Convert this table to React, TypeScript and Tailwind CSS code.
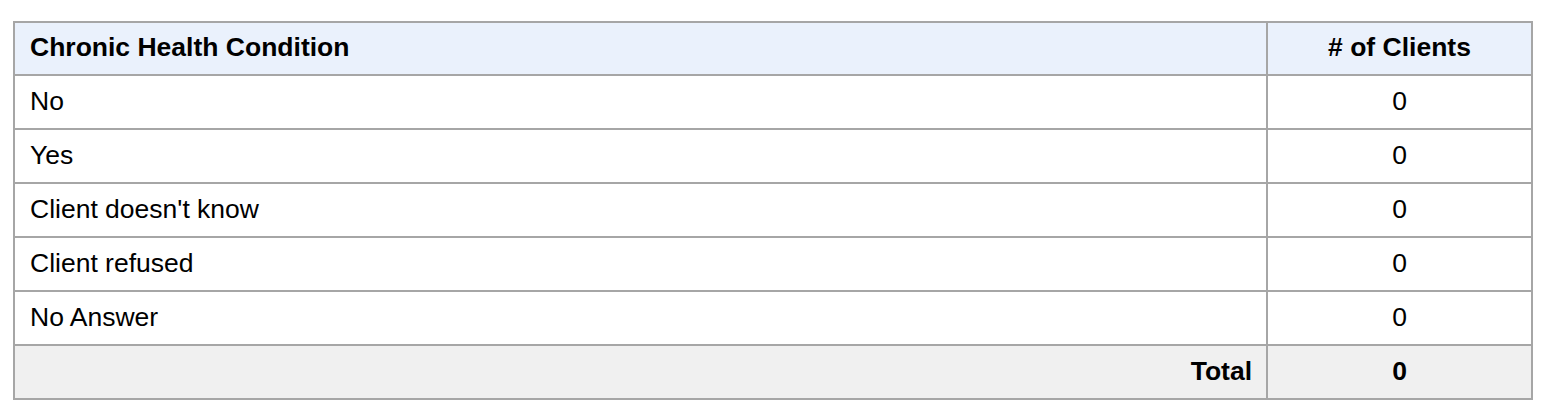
export default function App() {
  const rows = ["No", "Yes", "Client doesn't know", "Client refused", "No Answer"];
  return (
    <div className="bg-white w-[1553px] h-[419px] pt-[21px] pl-[13px] pr-[20px]" style={{ fontFamily: '"Liberation Sans", Arial, sans-serif' }}>
      <table className="w-[1520px] border-collapse border-2 border-[#a6a6a6] text-[26.5px] leading-[30px] text-black">
        <thead>
          <tr className="bg-[#eaf1fc] h-[53px]">
            <th className="border-2 border-[#a6a6a6] text-left font-bold pl-[15px] pr-[14px] pt-0 pb-[3px]">Chronic Health Condition</th>
            <th className="border-2 border-[#a6a6a6] text-center font-bold px-[15px] pt-0 pb-[3px] w-[265px]"># of Clients</th>
          </tr>
        </thead>
        <tbody>
          {rows.map((r) => (
            <tr key={r} className="h-[54px]">
              <td className="border-2 border-[#a6a6a6] text-left pl-[15px] pr-[14px] pt-0 pb-[2px]">{r}</td>
              <td className="border-2 border-[#a6a6a6] text-center px-[15px] pt-0 pb-[2px]">0</td>
            </tr>
          ))}
          <tr className="bg-[#f0f0f0] h-[54px]">
            <td className="border-2 border-[#a6a6a6] text-right font-bold pl-[15px] pr-[14px] pt-0 pb-[2px]">Total</td>
            <td className="border-2 border-[#a6a6a6] text-center font-bold px-[15px] pt-0 pb-[2px]">0</td>
          </tr>
        </tbody>
      </table>
    </div>
  );
}
